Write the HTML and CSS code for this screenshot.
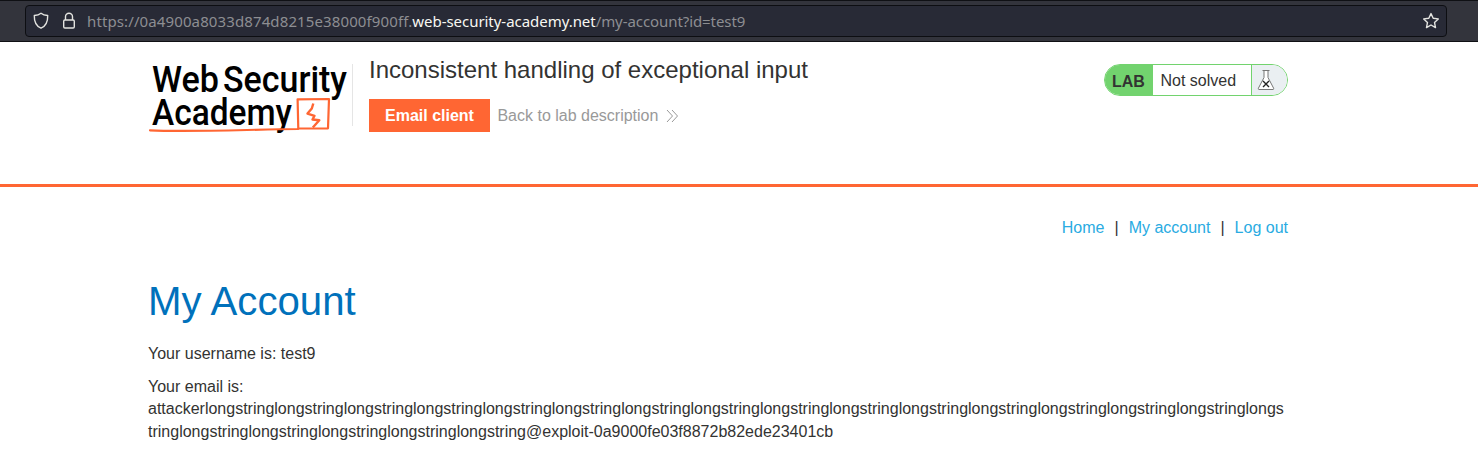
FILE: index.html
```html
<!DOCTYPE html>
<html lang="en">
<head>
<meta charset="utf-8">
<title>Inconsistent handling of exceptional input</title>
<link rel="stylesheet" href="styles.css">
</head>
<body>
<div class="toolbar">
  <div class="urlbar">
    <svg class="icon shield" width="16" height="18" viewBox="0 0 16 18"><path d="M8 1.200C6.200 2.600 3.800 3.300 1.300 3.500C1.100 9.500 3 14 8 16.200C13 14 14.900 9.500 14.700 3.500C12.200 3.300 9.800 2.600 8 1.200Z"/></svg>
    <svg class="icon lock" width="14" height="18" viewBox="0 0 14 18"><rect x="1.700" y="8" width="10.600" height="8" rx="1.200"/><path d="M3.500 8V4.700a3.500 3.500 0 0 1 7 0V8"/></svg>
    <span class="url"><span class="host">https://0a4900a8033d874d8215e38000f900ff.</span><span class="domain">web-security-academy.net</span><span class="path">/my-account?id=test9</span></span>
    <svg class="icon star" width="18" height="18" viewBox="0 0 18 18"><path d="M9 1.600L11.200 6.300L16.300 6.900L12.500 10.400L13.500 15.600L9 13L4.500 15.600L5.500 10.400L1.700 6.900L6.800 6.300Z"/></svg>
  </div>
</div>
<header class="header">
  <div class="container header-row">
    <svg class="logo" width="204" height="74" viewBox="0 0 204 74">
      <text x="4" y="30.300" textLength="67" lengthAdjust="spacingAndGlyphs">Web</text>
      <text x="75" y="30.300" textLength="124" lengthAdjust="spacingAndGlyphs">Security</text>
      <text x="4" y="62.700" textLength="140" lengthAdjust="spacingAndGlyphs">Academy</text>
      <path class="line" d="M2 68.300C40 70.300 100 67.500 150.300 67L149.600 37.300L181 37L180 66.300L150 66.500"/>
      <path class="bolt" d="M165.300 41.500L163.800 46.500L159.500 51.600L166.500 53.800L164.500 57.500L171.300 58.300L164.800 65.500"/>
    </svg>
    <div class="title-block">
      <h2>Inconsistent handling of exceptional input</h2>
      <div class="actions">
        <a class="button">Email client</a>
        <a class="back">Back to lab description</a>
        <svg class="chevrons" width="13" height="14" viewBox="0 0 13 14"><path d="M1 1L6.500 7L1 13M6 1L11.500 7L6 13"/></svg>
      </div>
    </div>
    <div class="status">
      <span class="lab">LAB</span>
      <span class="state">Not solved</span>
      <span class="flask"><svg width="18" height="22" viewBox="0 0 18 22"><path class="glass" d="M5.500 1.500H12.500M7 1.500V8.500L1.500 19C1 20.200 1.500 20.500 2 20.500H16C16.500 20.500 17 20.200 16.500 19L11 8.500V1.500"/><path class="cross" d="M6 12L12 18M12 12L6 18"/></svg></span>
    </div>
  </div>
</header>
<main class="container">
  <nav class="nav"><a>Home</a><span>|</span><a>My account</a><span>|</span><a>Log out</a></nav>
  <h1>My Account</h1>
  <p>Your username is: test9</p>
  <p>Your email is: attackerlongstringlongstringlongstringlongstringlongstringlongstringlongstringlongstringlongstringlongstringlongstringlongstringlongstringlongstringlongstringlongstringlongstringlongstringlongstringlongstringlongstring@exploit-0a9000fe03f8872b82ede23401cb</p>
</main>
</body>
</html>
```
FILE: styles.css
```css
* { box-sizing: border-box; }
body {
  margin: 0;
  height: 461px;
  overflow: hidden;
  background: #fff;
  color: #333332;
  font: 16px/22.800px "Liberation Sans", Arial, sans-serif;
}
.toolbar {
  height: 42px;
  padding: 4px 31px 0 25px;
  background: #33343c;
  border-top: 1px solid #0f1014;
  border-bottom: 1px solid #0f1014;
}
.urlbar {
  height: 32px;
  display: flex;
  align-items: center;
  padding: 0 6px 0 7px;
  background: #282a36;
  border: 1px solid #0d0e12;
  border-radius: 4px;
}
.icon { fill: none; stroke: #e4e4e0; stroke-width: 1.400; stroke-linejoin: round; flex: none; }
.lock { margin-left: 13px; }
.url {
  flex: 1;
  margin-left: 11px;
  font-family: "Noto Sans", sans-serif;
  font-size: 15px;
  color: #8d8e92;
  white-space: nowrap;
}
.host { letter-spacing: 0.115px; }
.domain { color: #f8f8f2; letter-spacing: -0.040px; }
.path { letter-spacing: -0.080px; }
.container { width: 1140px; margin-left: 148px; }
.header { height: 145px; border-bottom: 3px solid #ff6633; }
.header-row { display: flex; align-items: flex-start; padding-top: 20px; }
.logo { flex: none; overflow: visible; }
.logo text { font: 500 37px Roboto, sans-serif; fill: #000; }
.logo path { fill: none; stroke: #ff6633; stroke-width: 2.200; stroke-linejoin: round; stroke-linecap: round; }
.logo .bolt { stroke-width: 2.400; stroke-linecap: butt; }
.title-block { flex: 1; height: 62px; margin-top: 2px; padding-left: 16px; border-left: 1px solid #e5e5e5; }
h2 { margin: -7px 0 0; font-size: 24px; line-height: 26px; font-weight: 400; }
.actions { display: flex; align-items: center; margin-top: 16px; }
.button { height: 33px; padding: 0 16px; line-height: 33px; font-weight: 700; color: #fff; background: #ff6633; }
.back { margin-left: 7.500px; line-height: 33px; color: #999; }
.chevrons { margin-left: 7.500px; fill: none; stroke: #999; stroke-width: 1; }
.status {
  display: flex;
  width: 184px;
  height: 32px;
  margin-top: 2px;
  border: 1px solid #72d36e;
  border-radius: 16px;
  overflow: hidden;
  line-height: 31px;
}
.lab { width: 48px; padding-left: 7px; font-weight: 700; line-height: 33px; background: #72d36e; }
.state { flex: 1; padding-left: 7.500px; }
.flask { width: 36px; padding: 4px 0 0 5px; background: #eaeff2; border-left: 1px solid #72d36e; line-height: 0; }
.glass { fill: #fff; stroke: #777; stroke-width: 1; }
.cross { fill: none; stroke: #222; stroke-width: 1.400; }
.nav { display: flex; justify-content: flex-end; gap: 10px; padding-top: 30px; }
.nav a { color: #29abe2; }
h1 { margin: 40px 0 0; font-size: 40.200px; line-height: 44px; font-weight: 400; color: #0071bb; }
p { margin: 10px 0 0; overflow-wrap: break-word; }
h1 + p { margin-top: 19px; }
```
